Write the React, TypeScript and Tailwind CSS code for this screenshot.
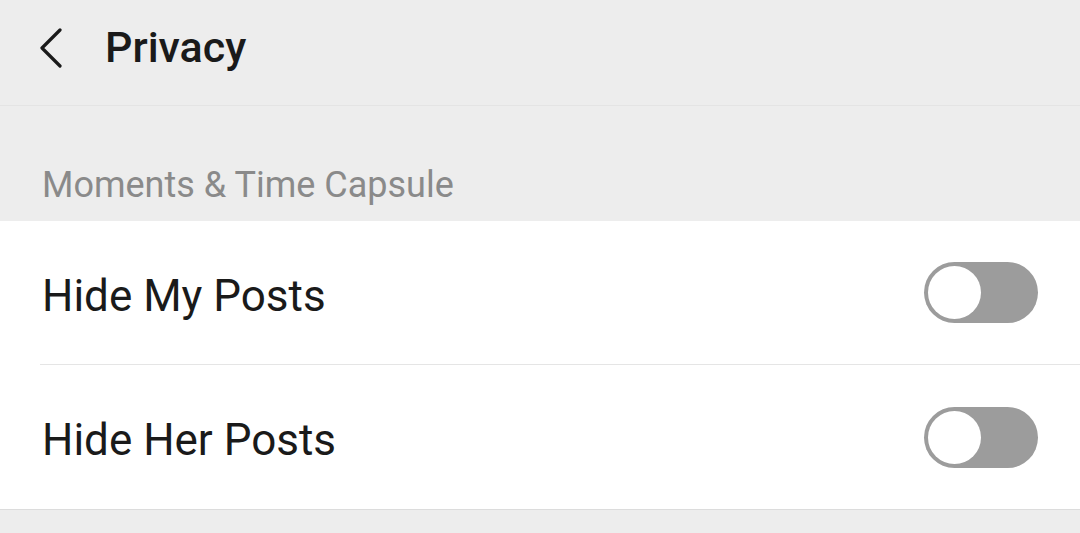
import React from "react";

function Toggle() {
    return (
        <div className="flex h-[61px] w-[114px] items-center rounded-full bg-[#9c9c9c] px-[4px]">
            <div className="h-[53px] w-[53px] rounded-full bg-white" />
        </div>
    );
}

function Row({ label, divider }: { label: string; divider?: boolean }) {
    return (
        <div className="pl-[40px]">
            <div className={`flex h-[144px] items-center justify-between pr-[42px] ${divider ? "border-b border-[#e5e5e5]" : ""}`}>
                <span className="pl-[2px] pt-[6px] text-[44px] text-[#1a1a1a]">{label}</span>
                <Toggle />
            </div>
        </div>
    );
}

export default function App() {
    return (
        <div className="h-[533px] w-[1080px] overflow-hidden bg-[#ededed]" style={{ fontFamily: "Roboto, 'Noto Sans', sans-serif" }}>
            <div className="flex h-[106px] items-center border-b border-[#e4e4e4] pb-[10px]">
                <div className="flex w-[105px] items-center pl-[38px]">
                    <svg width="26" height="40" viewBox="0 0 26 40" fill="none">
                        <path d="M22 2 L4 20 L22 38" stroke="#1a1a1a" strokeWidth="3.2" strokeLinecap="round" strokeLinejoin="round" />
                    </svg>
                </div>
                <h1 className="text-[43px] font-medium text-[#1a1a1a]">Privacy</h1>
            </div>
            <div className="flex h-[115px] items-end pb-[9px] pl-[42px]">
                <span className="text-[36px] text-[#8a8a8a]">Moments &amp; Time Capsule</span>
            </div>
            <div className="border-b border-[#dcdcdc] bg-white">
                <Row label="Hide My Posts" divider />
                <Row label="Hide Her Posts" />
            </div>
        </div>
    );
}
